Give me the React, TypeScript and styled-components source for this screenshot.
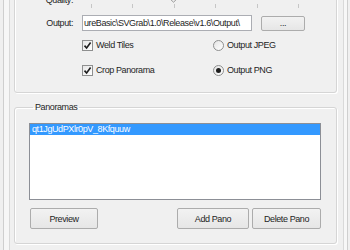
import styled, { createGlobalStyle } from 'styled-components'

const GlobalStyle = createGlobalStyle`
  html, body {
    margin: 0;
    padding: 0;
    background: #f0f0f0;
  }
  body {
    font-family: "Liberation Sans", Arial, sans-serif;
    font-size: 9px;
    letter-spacing: -0.4px;
    color: #1e1e1e;
  }
`

const TICKS = [0, 1, 2, 3, 4, 5]

const CheckBox = ({ checked, label }: { checked?: boolean; label: string }) => (
  <Option>
    <CheckSquare>
      {checked && (
        <svg width="9" height="9" viewBox="0 0 9 9">
          <path d="M1.5 4.6 L3.6 7 L7.6 1.6" fill="none" stroke="#1e1e1e" strokeWidth="1.6" />
        </svg>
      )}
    </CheckSquare>
    <span>{label}</span>
  </Option>
)

const RadioButton = ({ checked, label }: { checked?: boolean; label: string }) => (
  <Option>
    <RadioCircle>{checked && <RadioDot />}</RadioCircle>
    <span>{label}</span>
  </Option>
)

const App = () => {
  return (
    <>
      <GlobalStyle />
      <Screen>
        <Frame>
          <Client>
            <SettingsGroup>
              <FieldLabel $top>Quality:</FieldLabel>
              <Slider>
                <Thumb>
                  <svg width="11" height="16" viewBox="0 0 11 16">
                    <path d="M0.5 0.5 H10.5 V10.5 L5.5 15.2 L0.5 10.5 Z" fill="#ececec" stroke="#9a9a9a" />
                  </svg>
                </Thumb>
                <TickRow>
                  {TICKS.map((t) => (
                    <Tick key={t} />
                  ))}
                </TickRow>
              </Slider>

              <FieldLabel>Output:</FieldLabel>
              <OutputRow>
                <PathBox>ureBasic\SVGrab\1.0\Release\v1.6\Output\</PathBox>
                <Button $w={44} $h={15}>...</Button>
              </OutputRow>

              <span />
              <OptionsGrid>
                <CheckBox checked label="Weld Tiles" />
                <RadioButton label="Output JPEG" />
                <CheckBox checked label="Crop Panorama" />
                <RadioButton checked label="Output PNG" />
              </OptionsGrid>
            </SettingsGroup>

            <PanoGroup>
              <Legend>Panoramas</Legend>
              <ListBox>
                <ListItem $selected>qt1JgUdPXlr0pV_8Kfquuw</ListItem>
              </ListBox>
              <ButtonRow>
                <Button $w={68}>Preview</Button>
                <ButtonPair>
                  <Button $w={72}>Add Pano</Button>
                  <Button $w={69}>Delete Pano</Button>
                </ButtonPair>
              </ButtonRow>
            </PanoGroup>
          </Client>
        </Frame>
      </Screen>
    </>
  )
}

export default App

const Screen = styled.div`
  width: 350px;
  height: 250px;
  box-sizing: border-box;
  padding: 0 2px 0 3px;
  display: flex;
  overflow: hidden;
  background: #f0f0f0;
`

const Frame = styled.div`
  flex: 1;
  display: flex;
  padding: 0 3px 0 5px;
  background: #f7f7f7;
  border-left: 1px solid #cfcfcf;
  border-right: 1px solid #cfcfcf;
`

const Client = styled.div`
  flex: 1;
  display: flex;
  flex-direction: column;
  padding: 0 6px 0 4px;
  background: #f0f0f0;
  border-left: 1px solid #d9d9d9;
  border-right: 1px solid #d9d9d9;
  overflow: hidden;
`

const SettingsGroup = styled.div`
  margin-top: -20px;
  height: 113px;
  box-sizing: border-box;
  padding-top: 9px;
  display: grid;
  grid-template-columns: 59px 1fr;
  grid-template-rows: 25px 16px auto;
  column-gap: 8px;
  align-items: center;
  border: 1px solid #d5d5d5;
  border-radius: 3px;
  box-shadow: inset 1px 1px 0 #ffffff, 1px 1px 0 #ffffff;
`

const FieldLabel = styled.div<{ $top?: boolean }>`
  text-align: right;
  line-height: 16px;
  align-self: ${(p) => (p.$top ? 'start' : 'center')};
  margin-top: ${(p) => (p.$top ? '2px' : '0')};
  padding-right: 1px;
`

const Slider = styled.div`
  position: relative;
  height: 25px;
  margin-left: 9px;
  width: 208px;
`

const Thumb = styled.div`
  position: absolute;
  left: 77px;
  top: -3px;
  line-height: 0;
`

const TickRow = styled.div`
  position: absolute;
  left: 0;
  right: 0;
  top: 14px;
  display: flex;
  justify-content: space-between;
`

const Tick = styled.div`
  width: 1px;
  height: 4px;
  background: #c6c6c6;
`

const OutputRow = styled.div`
  display: flex;
  align-items: center;
  height: 16px;
`

const PathBox = styled.div`
  width: 170px;
  height: 16px;
  box-sizing: border-box;
  display: flex;
  align-items: center;
  overflow: hidden;
  padding-left: 1px;
  background: #ffffff;
  border: 1px solid #abadb3;
  white-space: nowrap;
  margin-right: 9px;
`

const OptionsGrid = styled.div`
  align-self: start;
  margin-top: 7px;
  display: grid;
  grid-template-columns: 131px auto;
  row-gap: 11px;
`

const Option = styled.label`
  display: flex;
  align-items: center;
  gap: 3px;
  height: 14px;
  line-height: 14px;
`

const CheckSquare = styled.div`
  width: 11px;
  height: 11px;
  box-sizing: border-box;
  display: flex;
  align-items: center;
  justify-content: center;
  border: 1px solid #8e8f8f;
  background: linear-gradient(135deg, #e6e6e6, #ffffff);
`

const RadioCircle = styled.div`
  width: 11px;
  height: 11px;
  box-sizing: border-box;
  display: flex;
  align-items: center;
  justify-content: center;
  border: 1px solid #8e8f8f;
  border-radius: 50%;
  background: linear-gradient(135deg, #e4e4e4, #ffffff);
`

const RadioDot = styled.div`
  width: 5px;
  height: 5px;
  border-radius: 50%;
  background: #1e1e1e;
`

const PanoGroup = styled.fieldset`
  margin: 8px 0 0;
  padding: 10px 15px 14px 14px;
  border: 1px solid #d5d5d5;
  border-radius: 3px;
  box-shadow: inset 1px 1px 0 #ffffff, 1px 1px 0 #ffffff;
  min-width: 0;
`

const Legend = styled.legend`
  margin-left: 4px;
  padding: 0 2px;
  line-height: 12px;
`

const ListBox = styled.div`
  height: 77px;
  box-sizing: border-box;
  padding: 0;
  background: #ffffff;
  border: 1px solid #8c8f96;
`

const ListItem = styled.div<{ $selected?: boolean }>`
  height: 11px;
  line-height: 11px;
  padding-left: 2px;
  color: ${(p) => (p.$selected ? '#ffffff' : '#1e1e1e')};
  background: ${(p) => (p.$selected ? '#3399ff' : 'transparent')};
`

const ButtonRow = styled.div`
  margin-top: 8px;
  padding-left: 1px;
  display: flex;
  justify-content: space-between;
`

const ButtonPair = styled.div`
  display: flex;
  gap: 3px;
`

const Button = styled.button<{ $w: number; $h?: number }>`
  width: ${(p) => p.$w}px;
  height: ${(p) => p.$h ?? 21}px;
  padding: 0;
  font: inherit;
  letter-spacing: inherit;
  color: #1e1e1e;
  border: 1px solid #acacac;
  border-radius: 2px;
  background: linear-gradient(#f2f2f2, #e6e6e6);
`
